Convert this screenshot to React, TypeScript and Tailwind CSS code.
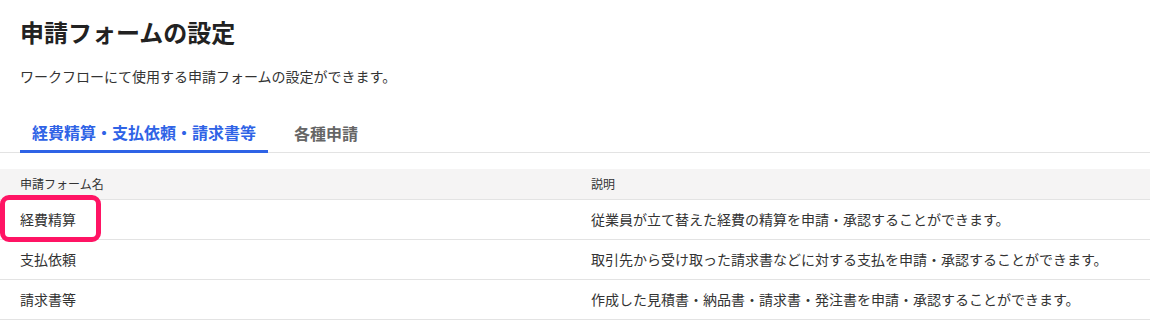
const rows = [
  { name: "経費精算", description: "従業員が立て替えた経費の精算を申請・承認することができます。" },
  { name: "支払依頼", description: "取引先から受け取った請求書などに対する支払を申請・承認することができます。" },
  { name: "請求書等", description: "作成した見積書・納品書・請求書・発注書を申請・承認することができます。" },
];

export default function App() {
  return (
    <div
      className="relative h-[333px] w-[1150px] overflow-hidden bg-white text-[#333]"
      style={{ fontFamily: '"Noto Sans CJK JP", "Noto Sans", sans-serif' }}
    >
      <div className="px-5 pt-[14px]">
        <h1 className="text-[24px] font-bold leading-[36px] text-[#222]">申請フォームの設定</h1>
        <p className="mt-[16px] text-[14px] leading-[20px]">
          ワークフローにて使用する申請フォームの設定ができます。
        </p>
      </div>

      <div className="mt-[34px] flex border-b border-[#e3e3e3] px-5">
        <button className="-mb-px border-b-[3px] border-[#2f63e6] px-3 pb-[6px] text-[16px] font-bold leading-[24px] text-[#2f63e6]">
          経費精算・支払依頼・請求書等
        </button>
        <button className="ml-[14px] px-3 pb-[6px] text-[16px] font-bold leading-[24px] text-[#666]">
          各種申請
        </button>
      </div>

      <table className="mt-[16px] w-full border-collapse text-left">
        <thead>
          <tr className="h-[30px] bg-[#f5f4f4] text-[12px] font-normal">
            <th className="w-[571px] border-b border-[#e3e3e3] pl-5 font-normal">申請フォーム名</th>
            <th className="border-b border-[#e3e3e3] pl-5 font-normal">説明</th>
          </tr>
        </thead>
        <tbody>
          {rows.map((row) => (
            <tr className="h-[40px] text-[14px]" key={row.name}>
              <td className="border-b border-[#e3e3e3] pl-5">{row.name}</td>
              <td className="border-b border-[#e3e3e3] pl-5">{row.description}</td>
            </tr>
          ))}
        </tbody>
      </table>

      {/* highlight annotation */}
      <div className="absolute left-0 top-[195px] h-[47px] w-[101px] rounded-[9px] border-[5px] border-[#ff1464]" />
    </div>
  );
}
